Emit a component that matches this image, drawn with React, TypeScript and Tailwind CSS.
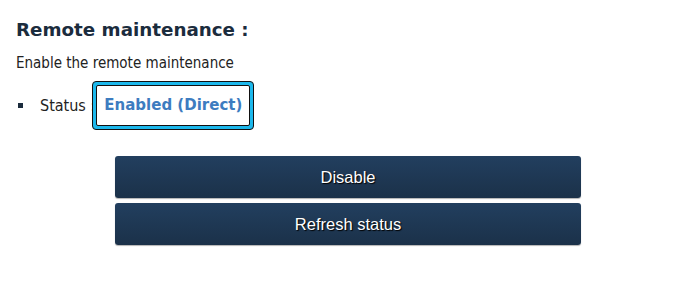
export default function App() {
  return (
    <div className="w-[700px] h-[295px] bg-white pl-4 pt-[18px] font-['DejaVu_Sans',sans-serif]">
      <h1 className="text-[18.3px] font-bold leading-6 text-[#1b2c3d]">Remote maintenance :</h1>
      <p className="mt-[13px] text-[15px] leading-4 text-[#222] font-['DejaVu_Sans_Condensed','DejaVu_Sans',sans-serif]">
        Enable the remote maintenance
      </p>

      <ul className="mt-[10px]">
        <li className="flex items-center">
          <span className="ml-[2px] mr-[17px] h-[5px] w-[5px] bg-[#1b2c3d]" />
          <span className="text-[16px] text-[#222] font-['DejaVu_Sans_Condensed','DejaVu_Sans',sans-serif]">Status :</span>
          <div className="-ml-[3px] rounded-[4px] border border-[#111] bg-[#1cb8ec] p-[3px]">
            <div className="rounded-[2px] border border-[#111] bg-white px-[7px] pt-[11px] pb-[12px] text-[15px] font-bold leading-4 text-[#3d7cc0]">
              Enabled (Direct)
            </div>
          </div>
        </li>
      </ul>

      <div className="mt-[26px] ml-[99px] flex w-[466px] flex-col gap-[5px] font-['Liberation_Sans',Arial,sans-serif]">
        <button className="h-[42px] rounded-[3px] bg-gradient-to-b from-[#223f5f] to-[#1b3149] text-[16.5px] text-white shadow-[0_1px_1px_rgba(0,0,0,0.3)] [text-shadow:1px_1px_1px_#000]">
          Disable
        </button>
        <button className="h-[42px] rounded-[3px] bg-gradient-to-b from-[#223f5f] to-[#1b3149] text-[16.5px] text-white shadow-[0_1px_1px_rgba(0,0,0,0.3)] [text-shadow:1px_1px_1px_#000]">
          Refresh status
        </button>
      </div>
    </div>
  );
}
